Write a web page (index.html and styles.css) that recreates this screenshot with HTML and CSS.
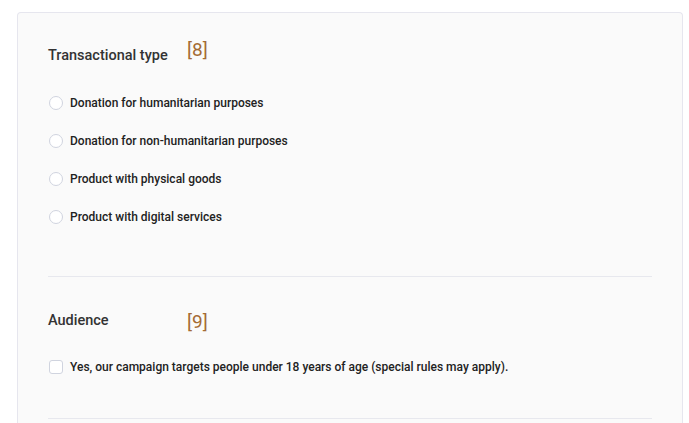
FILE: index.html
```html
<!DOCTYPE html>
<html lang="en">
<head>
<meta charset="utf-8">
<title>Campaign settings</title>
<link rel="stylesheet" href="styles.css">
</head>
<body>
<div class="card">
  <section class="section section-first">
    <div class="heading">
      <h2 class="label">Transactional type</h2>
      <span class="note note-up">[8]</span>
    </div>
    <ul class="options">
      <li class="option"><span class="radio"></span><span class="option-text">Donation for humanitarian purposes</span></li>
      <li class="option"><span class="radio"></span><span class="option-text">Donation for non-humanitarian purposes</span></li>
      <li class="option"><span class="radio"></span><span class="option-text">Product with physical goods</span></li>
      <li class="option"><span class="radio"></span><span class="option-text">Product with digital services</span></li>
    </ul>
  </section>
  <section class="section section-second">
    <div class="heading">
      <h2 class="label">Audience</h2>
      <span class="note note-down">[9]</span>
    </div>
    <ul class="options options-second">
      <li class="option"><span class="checkbox"></span><span class="option-text">Yes, our campaign targets people under 18 years of age (special rules may apply).</span></li>
    </ul>
  </section>
</div>
</body>
</html>
```
FILE: styles.css
```css
html, body {
  margin: 0;
  padding: 0;
  background: #ffffff;
}

body {
  font-family: Roboto, "Liberation Sans", Arial, sans-serif;
  color: #222222;
}

.card {
  margin: 12px 0 0 17px;
  width: 666px;
  box-sizing: border-box;
  background: #fafafa;
  border: 1px solid #e6e6ee;
  border-bottom: none;
  border-radius: 4px 4px 0 0;
  padding: 0 30px;
  height: 430px;
}

.section {
  border-bottom: 1px solid #e7e8ee;
}

.section-first {
  padding: 33px 0 40px;
}

.section-second {
  padding: 34px 0 32px;
}

.heading {
  display: flex;
  align-items: flex-start;
  height: 20px;
}

.label {
  margin: 0;
  width: 139px;
  flex: none;
  font-size: 14.5px;
  line-height: 20px;
  font-weight: 500;
  color: #333333;
}

.note {
  font-size: 19px;
  line-height: 20px;
  font-weight: 400;
  color: #a46b34;
}

.note-up {
  margin-top: -6px;
}

.note-down {
  margin-top: 1px;
}

.options {
  list-style: none;
  margin: 18px 0 0;
  padding: 0;
}

.options-second {
  margin-top: 17px;
}

.option {
  display: flex;
  align-items: center;
  height: 38px;
}

.radio,
.checkbox {
  flex: none;
  width: 14px;
  height: 14px;
  box-sizing: border-box;
  margin-left: 1px;
  margin-right: 7px;
  background: #ffffff;
  border: 1px solid #d0d4df;
}

.radio {
  border-radius: 50%;
}

.checkbox {
  border-radius: 3px;
}

.option-text {
  font-size: 12px;
  line-height: 16px;
  font-weight: 500;
  color: #222222;
}
```
